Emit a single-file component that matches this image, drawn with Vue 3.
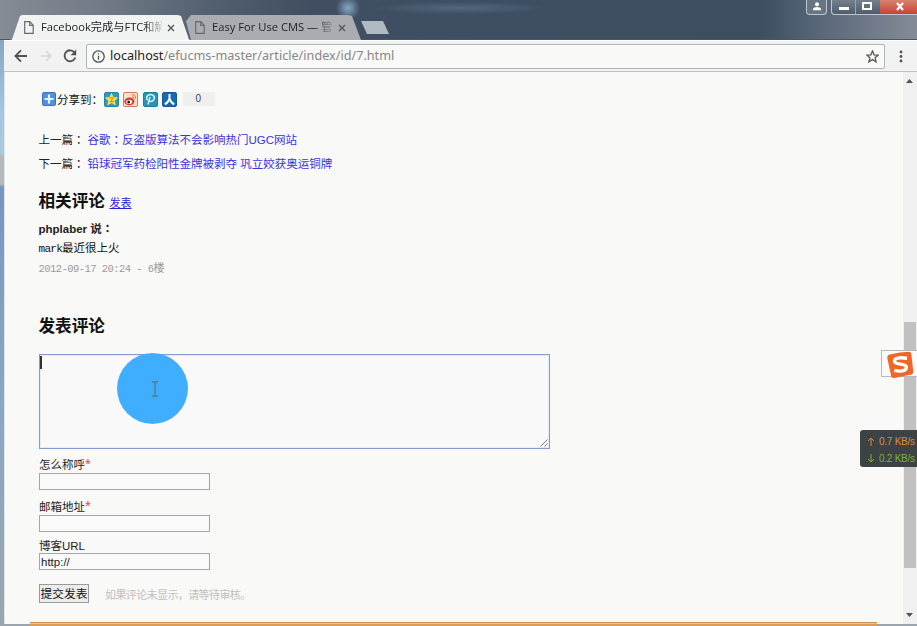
<script setup>
import { ref } from 'vue'

const tabs = [
  { title: 'Facebook完成与FTC和解', active: true },
  { title: 'Easy For Use CMS — 管', active: false },
]
const articles = [
  { label: '上一篇：', title: '谷歌：反盗版算法不会影响热门UGC网站' },
  { label: '下一篇：', title: '铅球冠军药检阳性金牌被剥夺 巩立姣获奥运铜牌' },
]
const name = ref('')
const email = ref('')
const url = ref('http://')
</script>

<template>
  <div class="window">
    <header class="titlebar">
      <div class="tabs">
        <div v-for="t in tabs" :key="t.title" class="tab" :class="{ active: t.active }">
          <svg class="doc" width="10" height="13" viewBox="0 0 10 13"><path d="M.7.7h5.1l3.4 3.5v8.1H.7zM5.7.8v3.6h3.5" /></svg>
          <span class="tab-title">{{ t.title }}</span>
          <svg class="x" width="8" height="8" viewBox="0 0 8 8"><path d="M1 1l6 6M7 1L1 7" /></svg>
        </div>
        <i class="new-tab"></i>
      </div>
      <div class="controls">
        <span class="user"><svg width="10" height="9" viewBox="0 0 10 9"><circle cx="5" cy="2.2" r="2" /><path d="M1 8.2V6.8Q2 5 5 5t4 1.8v1.4z" /></svg></span>
        <div class="group">
          <span class="min"><i></i></span>
          <span class="max"><i></i></span>
          <span class="close"><svg width="10" height="9" viewBox="0 0 10 9"><path d="M2 1l6 7M8 1L2 8" /></svg></span>
        </div>
      </div>
    </header>

    <nav class="toolbar">
      <svg class="nav back" width="14" height="14" viewBox="0 0 14 14"><path d="M13 7H1.5M7 1.3L1.4 7 7 12.7" /></svg>
      <svg class="nav forward" width="12" height="12" viewBox="0 0 14 14"><path d="M1 7h11.5M7 1.3L12.6 7 7 12.7" /></svg>
      <svg class="nav reload" width="14" height="14" viewBox="0 0 14 14"><path d="M11.5 3.5A5.5 5.5 0 1 0 12.3 8.5" /><path class="solid" d="M13.2.5v5.7H7.6z" /></svg>
      <div class="address">
        <svg class="info" width="13" height="13" viewBox="0 0 13 13"><circle cx="6.5" cy="6.5" r="5.7" /><path d="M6.5 5.8v3.9M6.5 3.2v1.4" /></svg>
        <span class="url"><b>localhost</b>/efucms-master/article/index/id/7.html</span>
        <svg class="star" width="13" height="13" viewBox="0 0 13 13"><path d="M6.5 1l1.6 3.8 4.1.3-3.1 2.7 1 4-3.6-2.2-3.6 2.2 1-4L.8 5.1l4.1-.3z" /></svg>
      </div>
      <svg class="more" width="4" height="13" viewBox="0 0 4 13"><circle cx="2" cy="2" r="1.4" /><circle cx="2" cy="6.5" r="1.4" /><circle cx="2" cy="11" r="1.4" /></svg>
    </nav>

    <div class="viewport">
      <main class="page">
        <div class="share">
          <svg width="14" height="14" viewBox="0 0 14 14"><rect x=".5" y=".5" width="13" height="13" rx="1.5" fill="#548fda" stroke="#3c72bd" /><path d="M7 2.5v9M2.5 7h9" stroke="#e8f4ff" stroke-width="2.2" /></svg>
          <span class="share-text">分享到：</span>
          <svg width="15" height="15" viewBox="0 0 15 15"><rect x=".5" y=".5" width="14" height="14" rx="1.5" fill="#299bcb" stroke="#277fab" /><path d="M7.5 .8l2 4.2 4.7.5-3.5 3.2 1.1 4.8-4.3-2.5-4.3 2.5 1.1-4.8L.8 5.5l4.7-.5z" fill="#ffe04b" /><path d="M5.5 5.8h4L6 9.7h4" fill="none" stroke="#c4860c" /></svg>
          <svg width="15" height="15" viewBox="0 0 15 15"><rect x=".5" y=".5" width="14" height="14" rx="1.5" fill="#fbe0c4" stroke="#c97d67" /><ellipse cx="6.4" cy="9.4" rx="5" ry="3.9" fill="#d43c2e" /><ellipse cx="6.2" cy="9.9" rx="3" ry="2.1" fill="#fff" /><circle cx="5.7" cy="10" r="1.5" fill="#222" /><path d="M8.5 3q4-1 4 3.7M9 5q1.8-.3 1.7 1.7" fill="none" stroke="#ee7342" stroke-width="1.1" /></svg>
          <svg width="15" height="15" viewBox="0 0 15 15"><rect x=".5" y=".5" width="14" height="14" rx="1.5" fill="#2795b8" stroke="#227b9c" /><path d="M5 12.5L7 5M4.5 8.5C1.7 3.5 7 1.5 9.8 3.2c3.5 2.2.4 7.5-3.8 5.8" fill="none" stroke="#d6f4fa" stroke-width="1.5" /></svg>
          <svg width="15" height="15" viewBox="0 0 15 15"><rect x=".5" y=".5" width="14" height="14" rx="1.5" fill="#1769b5" stroke="#145a9c" /><path d="M7.5 2v4.5Q6.7 10 2.8 12.4M7.5 6.5Q8.3 10 12.2 12.4" fill="none" stroke="#fff" stroke-width="2" /></svg>
          <span class="count">0</span>
        </div>

        <div class="siblings">
          <p v-for="a in articles" :key="a.label"><span class="sib-label">{{ a.label }}</span><a><template v-for="(part, i) in a.title.split('：')" :key="i"><span v-if="i" class="colon">：</span>{{ part }}</template></a></p>
        </div>

        <h2 class="comments-title">相关评论 <a>发表</a></h2>
        <article class="comment">
          <p class="author">phplaber 说<span class="colon">：</span></p>
          <p class="body"><span>mark</span>最近很上火</p>
          <p class="date">2012-09-17 20:24 - 6<span>楼</span></p>
        </article>

        <h2 class="form-title">发表评论</h2>
        <form class="form" @submit.prevent>
          <div class="editor">
            <i class="caret"></i>
            <div class="pointer">
              <svg width="8" height="16" viewBox="0 0 8 16"><path d="M1 .8h2.3L4 1.5l.7-.7H7M4 1.5v13M1 15.2h2.3l.7-.7.7.7H7" /></svg>
            </div>
            <svg class="grip" width="8" height="8" viewBox="0 0 8 8"><path d="M.5 7.5l7-7M4.5 7.5l3-3" /></svg>
          </div>
          <label>怎么称呼<em>*</em></label>
          <input v-model="name" type="text" />
          <label class="second">邮箱地址<em>*</em></label>
          <input v-model="email" type="text" />
          <label class="third">博客URL</label>
          <input v-model="url" type="text" />
          <div class="submit">
            <button type="submit">提交发表</button>
            <span>如果评论未显示，请等待审核。</span>
          </div>
        </form>
        <div class="rule"></div>
      </main>
      <aside class="scrollbar">
        <svg width="7" height="4" viewBox="0 0 7 4"><path d="M0 4l3.5-4L7 4z" /></svg>
        <i class="thumb"></i>
        <svg width="7" height="4" viewBox="0 0 7 4"><path d="M0 0l3.5 4L7 0z" /></svg>
      </aside>
    </div>

    <div class="ime">
      <svg width="28" height="28" viewBox="0 0 28 28"><path d="M4 3.5Q14 1 23 .8q2 0 2.3 2l2 18q.2 2-1.8 2.6L8 27q-2.3.4-2.8-2L1.3 7Q1 4.3 4 3.5z" fill="#f26522" /><path d="M21 7.3Q9 5.5 8.4 10c-.4 4.3 12 2 12 6.2 0 4.3-7 4.5-12.2 3.2" fill="none" stroke="#fff" stroke-width="3.4" /></svg>
    </div>
    <div class="network">
      <p class="up"><svg width="8" height="9" viewBox="0 0 8 9"><path d="M4 9V1M1 4l3-3 3 3" /></svg>0.7 KB/s</p>
      <p class="down"><svg width="8" height="9" viewBox="0 0 8 9"><path d="M4 0v8M1 5l3 3 3-3" /></svg>0.2 KB/s</p>
    </div>
  </div>
</template>

<style>
body { margin: 0; overflow: hidden; }
</style>

<style scoped>
* { box-sizing: border-box; }
p, h2 { margin: 0; }
svg { display: block; flex: none; }
.window { position: relative; width: 917px; height: 626px; overflow: hidden; display: flex; flex-direction: column; padding: 0 0 2px 4px; background: linear-gradient(#7c8796 0, #86a6c2 40px, #a5c6df 110px, #a9c9df 153px, #b9b9bc 156px, #b9b9bc 184px, #7896bd 187px, #8aa6c6 400px, #9aa5ae 626px); font-family: "Liberation Sans", "Noto Sans CJK SC", sans-serif; font-size: 11.5px; color: #222; }
.titlebar { height: 40px; margin-left: -4px; flex: none; display: flex; justify-content: space-between; align-items: flex-start; background: radial-gradient(circle at 348px 8px, #89a5bf 0, #607b95 6px, transparent 12px), radial-gradient(ellipse at 460px 8px, #53677f 0, transparent 90px), linear-gradient(90deg, #858b94 0, #6f7986 110px, #53606f 210px, #414e61 310px, #3e4f63 430px, #3d4e60 760px, #596779 820px, #858b97 917px); border-bottom: 1px solid #4c5764; }
.tabs { display: flex; padding: 15px 0 0 10px; }
.tab { display: flex; align-items: center; width: 181px; height: 25px; padding: 0 12px 0 14px; background: #a9acb1; clip-path: polygon(0 100%, 2px 98%, 10px 4%, 12px 0, 168px 0, 171px 4%, 179px 98%, 181px 100%); }
.tab:not(.active) { margin-left: -5px; width: 175px; padding-left: 9px; clip-path: polygon(5px 100%, 0 25%, 5px 0, 162px 0, 166px 4%, 175px 100%); }
.tab.active { background: #f1f2f2; z-index: 1; }
.doc { fill: none; stroke: #66696d; stroke-width: 1.2; }
.tab-title { width: 121px; margin-left: 7px; overflow: hidden; white-space: nowrap; font: 11.2px/18px "Open Sans", "Noto Sans CJK SC", sans-serif; color: #202226; position: relative; top: -1px; -webkit-mask-image: linear-gradient(90deg, #000 102px, transparent 124px); mask-image: linear-gradient(90deg, #000 102px, transparent 124px); }
.x { margin-left: 5px; fill: none; stroke: #505358; stroke-width: 1.3; }
.new-tab { width: 28px; height: 13px; margin-top: 6px; background: #b1b9c1; clip-path: polygon(0 0, 22px 0, 28px 100%, 6px 100%); }
.controls { display: flex; gap: 4px; height: 16px; }
.controls span { display: flex; align-items: center; justify-content: center; }
.user { width: 21px; height: 15px; background: #687583; border: 1px solid #c0c8cf; border-top: 0; border-radius: 0 0 4px 4px; }
.user svg { fill: #fff; margin-top: -2px; }
.group { display: flex; width: 86px; height: 15px; border: 1px solid #c0c8cf; border-width: 0 0 1px 1px; border-radius: 0 0 0 4px; background: linear-gradient(#75818e, #4e5c6c); }
.min { width: 24px; border-right: 1px solid #9aa4ae; }
.min i { width: 10px; height: 3px; margin-top: 3px; background: #fff; }
.max { width: 24px; }
.max i { width: 10px; height: 8px; border: 2px solid #fff; margin: -2px 3px 0 0; }
.close { flex: 1; background: linear-gradient(#d6826f, #c8442e); }
.close svg { fill: none; stroke: #fff; stroke-width: 2.2; margin: -2px 0 0 3px; }
.toolbar { height: 32px; flex: none; display: flex; align-items: center; background: #f1f2f1; border-bottom: 1px solid #bdc1c1; border-top: 1px solid #fcfdfd; }
.nav { fill: none; stroke: #4e5052; stroke-width: 1.8; }
.back { margin-left: 10px; }
.forward { margin-left: 12px; stroke: #d5d6d7; }
.reload { margin-left: 11px; }
.reload .solid { fill: #4e5052; stroke: none; }
.address { display: flex; align-items: center; width: 799px; height: 25px; margin-left: 9px; padding: 0 5px; border: 1px solid #afb6b5; border-radius: 2px; background: #f9f9f7; }
.info { fill: none; stroke: #505254; stroke-width: 1.3; }
.url { margin-left: 5px; flex: 1; font: 12.65px/20px "Noto Sans", sans-serif; color: #85878a; position: relative; top: -1px; }
.url b { font-weight: 400; color: #222; }
.star { fill: none; stroke: #55585a; stroke-width: 1.3; }
.more { margin-left: 14px; fill: #505254; }
.viewport { flex: 1; min-height: 0; display: flex; }
.page { flex: 1; position: relative; display: flex; flex-direction: column; padding: 18px 26px 0 34px; background: #f9f9f8; border-left: 1px solid #dfe6e8; }
.share { display: flex; align-items: center; height: 18px; margin-left: -1px; padding-left: 4px; }
.share svg + svg { margin-left: 4.4px; }
.share-text { width: 47px; margin-left: 1px; white-space: nowrap; color: #111; }
.count { width: 32px; height: 14px; margin-left: 6px; padding-right: 2px; text-align: center; font: 10px/14px "Liberation Sans", sans-serif; background: #efefef; color: #444; }
.siblings { margin: 20px 0 0 -.5px; font-family: "Liberation Sans", "Noto Sans CJK TC", sans-serif; }
.siblings p { height: 24px; line-height: 25px; display: flex; }
.sib-label { width: 49px; }
.siblings a { font-family: "Liberation Sans", "Noto Sans CJK SC", sans-serif; color: #3a32dd; white-space: nowrap; }
h2 { margin-left: -.5px; height: 26px; font-size: 16.6px; line-height: 26px; color: #111; }
.comments-title { margin-top: 13px; }
h2 a { font-size: 11px; font-weight: 400; color: #2920d7; text-decoration: underline; }
.comment { margin-left: -.5px; height: 61px; }
.comment p { height: 20px; line-height: 20px; }
.comment .author { font-weight: 700; margin-top: 4px; }
.colon { font-family: "Noto Sans CJK TC", sans-serif; line-height: 1; }
.comment .body { color: #111; height: 20px; line-height: 19px; }
.body span { font-family: "Liberation Mono", monospace; font-size: 11px; letter-spacing: -.7px; }
.comment .date { font-family: "Liberation Mono", monospace; font-size: 10.5px; letter-spacing: -.55px; color: #999; }
.date span { font: 11px "Noto Sans CJK SC", sans-serif; }
.form-title { margin-top: 38px; }
.form { display: flex; flex-direction: column; align-items: flex-start; }
.editor { position: relative; width: 511px; height: 95px; margin-top: 14px; border: 1px solid #849bd0; box-shadow: inset 0 0 0 1px #e5ecf5; background: #faf9f9; }
.caret { position: absolute; left: 0; top: 1px; width: 1.5px; height: 13px; background: #303043; }
.pointer { position: absolute; left: 77px; top: -2px; width: 71px; height: 71px; border-radius: 50%; background: #40aeff; display: flex; align-items: center; justify-content: center; padding: 1px 0 0 4px; }
.pointer svg { fill: none; stroke: #55718b; stroke-width: 1.2; }
.grip { position: absolute; right: 1px; bottom: 1px; fill: none; stroke: #777; }
label { height: 17px; margin-top: 7px; line-height: 19px; }
label em { color: #e24461; font-style: normal; font-size: 15px; line-height: 10px; }
input { width: 171px; height: 17px; padding: 0 1px; border: 1px solid #a5a6a8; background: #fafafa; font: 11.5px "Liberation Sans", sans-serif; color: #222; outline: 0; }
label.second { margin-top: 8px; }
label.third { margin-top: 5px; height: 16px; }
.submit { display: flex; align-items: center; margin-top: 14px; }
button { width: 50px; height: 19px; padding: 0; border: 1px solid #98999b; background: #ececeb; white-space: nowrap; font: 11.7px/16px "Liberation Sans", "Noto Sans CJK SC", sans-serif; color: #111; }
.submit span { margin-left: 16px; font-size: 11px; letter-spacing: -.6px; color: #c2bfbf; white-space: nowrap; }
.rule { position: absolute; left: 25px; right: 26px; bottom: -2px; height: 4px; background: linear-gradient(#c99256 0 1px, #efc28b 1px 2px, #dc9d56 2px); }
.scrollbar { width: 14px; display: flex; flex-direction: column; align-items: center; padding: 7px 1px 7px 0; background: #f0f0f0; }
.scrollbar svg { fill: #525355; }
.thumb { width: 12px; height: 246px; margin: 239px 0 auto; background: #c1c1c1; }
.ime { position: absolute; left: 881px; top: 350px; width: 36px; height: 27px; border: 1px solid #b6b6c6; border-right: 0; background: #fcfbfb; padding-left: 4px; }
.network { position: absolute; left: 860px; top: 430px; width: 57px; height: 37px; padding-top: 3px; border-radius: 3px 0 0 3px; background: #3d4245; overflow: hidden; font-size: 10px; }
.network p { display: flex; align-items: center; height: 17px; padding-left: 7px; gap: 4px; white-space: nowrap; letter-spacing: -.25px; }
.network svg { fill: none; stroke: currentColor; }
.up { color: #df8c39; }
.down { color: #7cb332; }
</style>
